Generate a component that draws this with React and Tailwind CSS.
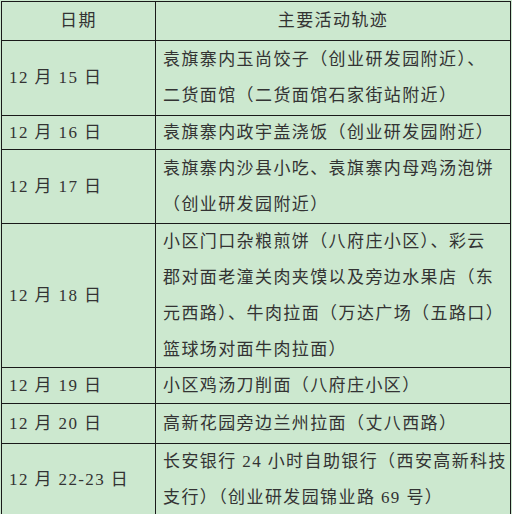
import React from 'react';

const rows = [
  { date: '12 月 15 日', h: 'h-[75px]', lines: ['袁旗寨内玉尚饺子（创业研发园附近）、', '二货面馆（二货面馆石家街站附近）'] },
  { date: '12 月 16 日', h: 'h-[34px]', lines: ['袁旗寨内政宇盖浇饭（创业研发园附近）'] },
  { date: '12 月 17 日', h: 'h-[74px]', lines: ['袁旗寨内沙县小吃、袁旗寨内母鸡汤泡饼', '（创业研发园附近）'] },
  {
    date: '12 月 18 日',
    h: 'h-[144px]',
    lines: ['小区门口杂粮煎饼（八府庄小区）、彩云', '郡对面老潼关肉夹馍以及旁边水果店（东', '元西路）、牛肉拉面（万达广场（五路口）', '篮球场对面牛肉拉面）'],
  },
  { date: '12 月 19 日', h: 'h-[36px]', lines: ['小区鸡汤刀削面（八府庄小区）'] },
  { date: '12 月 20 日', h: 'h-[40px]', lines: ['高新花园旁边兰州拉面（丈八西路）'] },
  { date: '12 月 22-23 日', h: 'h-[73px]', lines: ['长安银行 24 小时自助银行（西安高新科技', '支行）（创业研发园锦业路 69 号）'] },
];

const App = () => {
  return (
    <div className="w-[512px] h-[514px] overflow-hidden bg-[#cce8cf] pt-[1px] pl-[1px]">
      <div
        className="w-[510px] border-t border-l border-r border-[#1a1a1a] text-[17px] tracking-[1.4px] text-[#333333]"
        style={{ fontFamily: '"Liberation Serif", "Noto Sans CJK SC", serif' }}
      >
        <div className="flex h-[39px] border-b border-[#1a1a1a]">
          <div className="w-[154px] shrink-0 border-r border-[#1a1a1a] flex items-center justify-center">日期</div>
          <div className="flex-1 flex items-center justify-center">主要活动轨迹</div>
        </div>
        {rows.map((row) => (
          <div key={row.date} className={`flex border-b border-[#1a1a1a] ${row.h}`}>
            <div className="w-[154px] shrink-0 border-r border-[#1a1a1a] pl-[7px] flex items-center whitespace-nowrap">
              {row.date}
            </div>
            <div className="flex-1 pl-[7px] flex flex-col justify-center">
              {row.lines.map((line, i) => (
                <div key={i} className="leading-[36px] whitespace-nowrap">{line}</div>
              ))}
            </div>
          </div>
        ))}
      </div>
    </div>
  );
};

export default App;
